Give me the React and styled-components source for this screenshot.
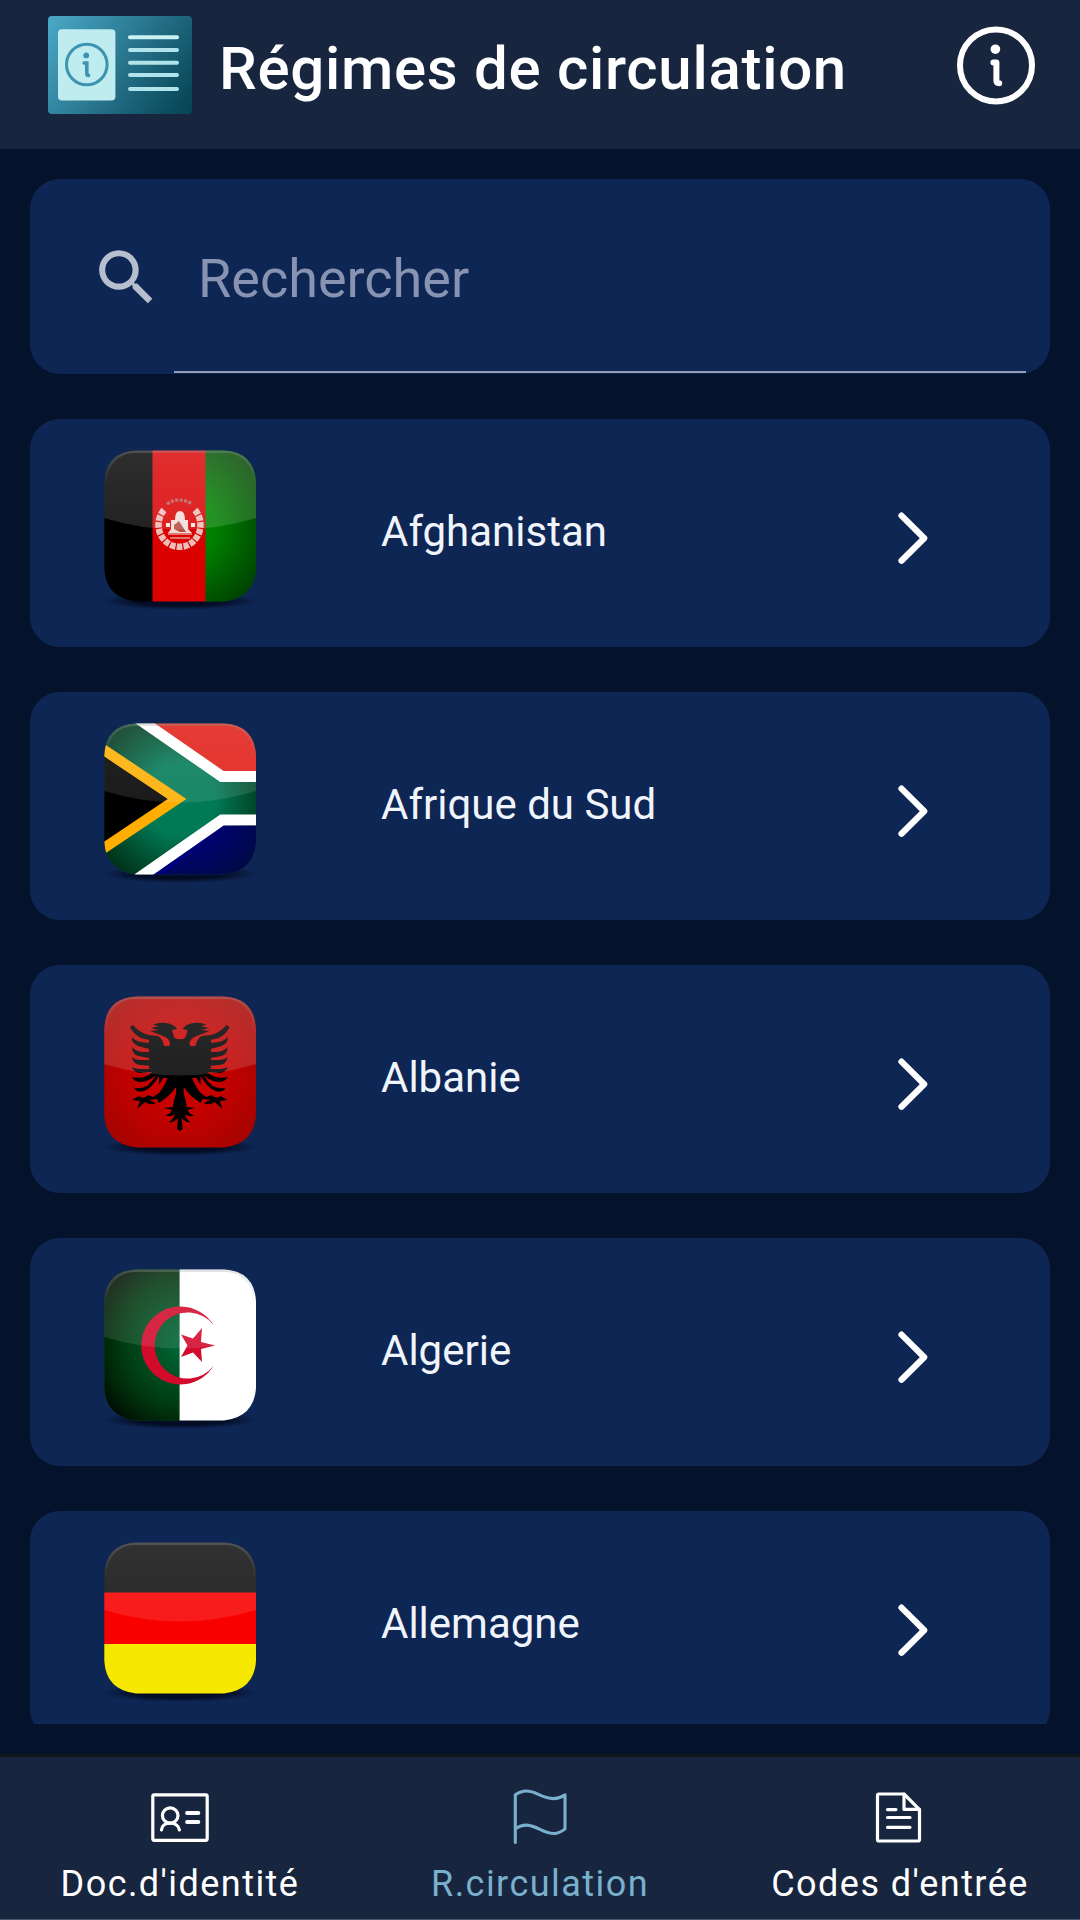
import React from 'react';
import styled, { createGlobalStyle } from 'styled-components';

const GlobalStyle = createGlobalStyle`
  *, *::before, *::after { box-sizing: border-box; }
  html, body { margin: 0; padding: 0; background: #04122b; }
`;

const Screen = styled.div`
  display: flex;
  flex-direction: column;
  width: 1080px;
  height: 1920px;
  overflow: hidden;
  background: #04122b;
  color: #fff;
  font-family: Roboto, "Noto Sans", sans-serif;
`;

const Header = styled.header`
  display: flex;
  align-items: flex-start;
  flex: none;
  height: 149px;
  padding: 0 44px 0 47px;
  background: #18253f;
`;

const LogoSlot = styled.div`
  flex: none;
  width: 145px;
  margin-top: 15px;
  svg { display: block; }
`;

const Title = styled.h1`
  flex: 1;
  margin: 34px 0 0 27px;
  font-size: 60px;
  line-height: 70px;
  font-weight: 500;
  letter-spacing: 0.7px;
  white-space: nowrap;
`;

const InfoButton = styled.button`
  flex: none;
  display: block;
  width: 80px;
  height: 80px;
  margin: 25px 0 0;
  padding: 0;
  border: 0;
  background: none;
  color: inherit;
  svg { display: block; }
`;

const Content = styled.main`
  display: flex;
  flex-direction: column;
  flex: none;
  height: 1575px;
  padding: 30px 30px 0;
  overflow: hidden;
`;

const SearchBox = styled.label`
  display: flex;
  align-items: stretch;
  flex: none;
  height: 195px;
  padding: 0 24px 1px 60px;
  border-radius: 30px;
  background: #0e2654;
  svg { flex: none; margin-top: 62px; }
`;

const SearchInput = styled.input`
  flex: 1;
  min-width: 0;
  margin: 0 0 0 11px;
  padding: 6px 0 0 24px;
  border: 0;
  border-bottom: 2px solid #929cb4;
  border-radius: 0;
  outline: 0;
  background: none;
  color: #fff;
  font: 400 54px Roboto, "Noto Sans", sans-serif;
  &::placeholder { color: #8793b0; opacity: 1; }
`;

const CountryList = styled.ul`
  display: flex;
  flex-direction: column;
  flex: none;
  gap: 45px;
  margin: 45px 0 0;
  padding: 0;
  list-style: none;
`;

const CountryRow = styled.li`
  display: flex;
  align-items: flex-start;
  height: 228px;
  padding: 0 116px 0 66px;
  border-radius: 30px;
  background: #0e2654;
`;

const FlagSlot = styled.div`
  flex: none;
  width: 168px;
  height: 168px;
  margin-top: 31px;
  background: radial-gradient(ellipse 78px 9px at 50% 151px, rgba(1, 8, 28, 0.85) 55%, rgba(1, 8, 28, 0) 100%);
  svg { display: block; filter: blur(0.6px); }
`;

const CountryName = styled.span`
  flex: 1;
  margin: 88px 0 0 117px;
  font-size: 42px;
  line-height: 50px;
  color: #f0f5fc;
  white-space: nowrap;
`;

const ChevronSlot = styled.span`
  flex: none;
  margin-top: 89px;
  svg { display: block; }
`;

const TabBar = styled.nav`
  display: flex;
  flex: none;
  height: 166px;
  margin-top: 30px;
  border-top: 3px solid #101518;
  border-bottom: 1px solid #4b5468;
  background: #18253f;
`;

const Tab = styled.a`
  display: flex;
  flex-direction: column;
  align-items: center;
  flex: 1;
  padding-top: 31px;
  color: ${(p) => (p.$active ? '#78b0cd' : '#ffffff')};
  svg { display: block; }
`;

const TabLabel = styled.span`
  margin-top: 15px;
  font-size: 36px;
  line-height: 42px;
  letter-spacing: 1.45px;
  white-space: nowrap;
`;

function Logo() {
  return (
    <svg width="146" height="100" viewBox="0 0 146 100" fill="none">
      <defs>
        <linearGradient id="logoFill" x1="0" y1="0" x2="146" y2="100" gradientUnits="userSpaceOnUse">
          <stop offset="0" stopColor="#4baac9" />
          <stop offset="0.45" stopColor="#2c7a93" />
          <stop offset="0.9" stopColor="#0a4a5c" />
          <stop offset="1" stopColor="#074455" />
        </linearGradient>
      </defs>
      <rect x="1" y="1" width="144" height="98" rx="4" fill="url(#logoFill)" />
      <rect x="11" y="14.2" width="57.4" height="71.3" rx="4" fill="#bfecef" />
      <circle cx="39.8" cy="49.5" r="20.3" stroke="#3c94b1" strokeWidth="3" />
      <circle cx="39.2" cy="40.4" r="2.9" fill="#3c94b1" />
      <path d="M37.2 48H39.8V58.2Q39.8 60.4 41.6 60.4" stroke="#3c94b1" strokeWidth="3.6" strokeLinecap="round" />
      <g stroke="#b0e3ea" strokeWidth="4" strokeLinecap="round">
        <path d="M83 22.2H130" stroke="#c8f2f4" />
        <path d="M83 35H130M83 47.8H130M83 60H130M83 74H130" />
      </g>
    </svg>
  );
}

function InfoIcon() {
  return (
    <svg width="80" height="80" viewBox="0 0 80 80" fill="none">
      <circle cx="40" cy="40.4" r="36" stroke="#fff" strokeWidth="6" />
      <circle cx="39.4" cy="24.2" r="4.8" fill="#fff" />
      <path d="M37.4 37.6H40.4V55.6Q40.4 58.3 43.2 58.3" stroke="#fff" strokeWidth="6" strokeLinecap="round" strokeLinejoin="round" />
    </svg>
  );
}

function SearchIcon() {
  return (
    <svg width="73" height="73" viewBox="0 0 24 24" fill="#b7bfcf">
      <path d="M15.5 14h-.79l-.28-.27A6.471 6.471 0 0 0 16 9.5 6.5 6.5 0 1 0 9.5 16c1.61 0 3.09-.59 4.23-1.57l.27.28v.79l5 4.99L20.49 19l-4.99-5zm-6 0C7.01 14 5 11.99 5 9.5S7.01 5 9.5 5 14 7.01 14 9.5 11.99 14 9.5 14z" />
    </svg>
  );
}

function Chevron() {
  return (
    <svg width="40" height="60" viewBox="0 0 40 60" fill="none">
      <path d="M7.5 7.6L30.2 30.2L7.5 52.8" stroke="#fff" strokeWidth="6.2" strokeLinecap="round" strokeLinejoin="round" />
    </svg>
  );
}

function IdCardIcon() {
  return (
    <svg width="60" height="60" viewBox="0 0 60 60" fill="none" stroke="currentColor" strokeWidth="3.2" strokeLinecap="round">
      <rect x="2.8" y="6.9" width="54.4" height="45.4" rx="1.5" />
      <ellipse cx="20.2" cy="27.5" rx="7.8" ry="7.6" />
      <path d="M11.4 42C11.8 38 15.1 35.1 20.2 35.1S28.8 38 29.4 42" />
      <path d="M37 25H48.4M37 34H48.4" strokeWidth="3.8" />
    </svg>
  );
}

function FlagIcon() {
  return (
    <svg width="60" height="60" viewBox="0 0 60 60" fill="none" stroke="currentColor" strokeWidth="3.1" strokeLinecap="round" strokeLinejoin="round">
      <path d="M5.3 54.4V6.9C13 1.6 19 2 29 6.6C40 11.7 47 12.1 55 6.9V40.9C47 47.4 41 46.7 30 41.4C19.5 36.2 13.5 35.4 5.3 40.7" />
    </svg>
  );
}

function DocumentIcon() {
  return (
    <svg width="60" height="60" viewBox="0 0 60 60" fill="none" stroke="currentColor" strokeWidth="3.2" strokeLinecap="round" strokeLinejoin="round">
      <path d="M34 6H9Q7.5 6 7.5 7.5V51.5Q7.5 53 9 53H48Q49.5 53 49.5 51.5V21.6Z" />
      <path d="M34 6V21.4H49.5" />
      <path d="M17.5 21.6H26M17.5 29.5H40M17.5 39.3H40" />
    </svg>
  );
}

function AfghanistanArt() {
  return (
    <>
      <rect width="49" height="152" fill="#000" />
      <rect x="48.5" width="53.5" height="152" fill="#da0000" />
      <rect x="101.5" width="51" height="152" fill="#008000" />
      <rect x="101.5" width="51" height="152" fill="url(#vignette)" opacity="0.8" />
      <g fill="none" stroke="#eed2cc">
        <path d="M60 60A21 22 0 1 0 91 60" strokeWidth="6.5" strokeDasharray="5.5 1.2" opacity="0.9" />
        <path d="M63 54Q75 46 88 54" strokeWidth="3.2" stroke="#b8635a" strokeDasharray="3 1.5" />
        <path d="M66 88H86M64 84H88" strokeWidth="2" opacity="0.55" />
      </g>
      <path d="M67 79V70H71Q71 61 76 61T81 70H84V79L88 83H64Z" fill="#f0dcd7" />
      <path d="M70 75L75 71L82 82H76L70 79Z" fill="#b84a42" />
      <path d="M62 75h4M87 75h4" stroke="#f4e8e4" strokeWidth="4" />
    </>
  );
}

function SouthAfricaArt() {
  return (
    <>
      <rect width="152" height="152" fill="#007a55" />
      <rect width="152" height="152" fill="url(#vignette)" />
      <path d="M38 -6L119 48.5H152V-6Z" fill="#e01c14" />
      <path d="M38 158L119 102.5H152V158Z" fill="#00007c" />
      <path d="M32 -6L118 53.5H153M32 157L118 97H153" fill="none" stroke="#fff" strokeWidth="11" />
      <path d="M-4 24L73 76L-4 128Z" fill="#000" />
      <path d="M-6 23L73 76L-6 129" fill="none" stroke="#ffae00" strokeWidth="10.5" />
      <path d="M152 102V152H60L119 102Z" fill="url(#vignette)" opacity="0.6" />
    </>
  );
}

const EAGLE_HALF =
  'M76 43Q72 44 70 41L68 34L73 33Q70 28 62 27Q54 26 49 29L55 30L47 32L54 34L46 35Q54 38 59 40Q65 42 66 47L65 52Q62 54 60 50Q59 43 54 40L45 39Q36 37 29 29L26 31Q29 38 37 42L45 44V47L37 46Q31 45 28 41Q27 47 34 50L45 53V56H38Q31 55 28 51Q28 58 34 60L45 62V64H37Q31 64 28 61Q29 68 36 69L48 70L45 73H36Q31 73 28 71Q29 76 36 77L48 76L45 79Q38 83 28 81Q30 86 37 86Q44 86 52 79Q48 86 43 90Q37 93 30 92Q33 97 40 95Q48 92 55 80V89L59 82L64 81Q60 91 55 97L49 101L44 99Q39 104 35 100L28 104L36 105L33 113L41 106Q47 110 52 107L45 104L53 103L55 107Q66 100 72 91V98Q69 106 69 111L60 112L68 114Q66 119 61 119Q66 122 71 118Q69 124 65 126Q70 127 74 122L73 133L76 135Z';

function AlbaniaArt() {
  return (
    <>
      <rect width="152" height="152" fill="#c90000" />
      <rect width="152" height="152" fill="url(#vignette)" opacity="0.25" />
      <path d="M45 42L60 50H92L107 42V72L90 82H62L45 72Z" fill="#000" />
      <path d={EAGLE_HALF} fill="#000" />
      <path d={EAGLE_HALF} fill="#000" transform="translate(151.6 0) scale(-1 1)" />
    </>
  );
}

function AlgeriaArt() {
  return (
    <>
      <rect width="76" height="152" fill="#006233" />
      <rect width="76" height="152" fill="url(#deepVignette)" />
      <rect x="75.6" width="77" height="152" fill="#fff" />
      <path d="M109.5 56A39 39 0 1 0 109.5 97A33 33 0 1 1 109.5 56Z" fill="#d20a2c" />
      <path d="M111 76.5L97 80L98 93L89 83.5L77 88L83.5 76.5L77 65.5L89 69.5L98 59L97 73Z" fill="#d20a2c" />
    </>
  );
}

function GermanyArt() {
  return (
    <>
      <rect width="152" height="51" fill="#101010" />
      <rect y="50.5" width="152" height="52" fill="#f80000" />
      <rect y="102" width="152" height="50" fill="#f7e800" />
    </>
  );
}

function GlossyFlag({ art: Art, gloss = 0.15 }) {
  return (
    <svg width="168" height="168" viewBox="-8 0 168 168">
      <g clipPath="url(#flagClip)">
        <Art />
        <path d="M0 0H152V68Q114 79.5 76 79.5T0 68Z" fill="url(#gloss)" opacity={gloss} />
        <rect x="1.5" y="1.5" width="149" height="170" rx="29" fill="none" stroke="url(#rim)" strokeWidth="3" />
      </g>
    </svg>
  );
}

const SharedDefs = styled.svg`
  display: block;
  flex: none;
  width: 0;
  height: 0;
`;

function FlagDefs() {
  return (
    <SharedDefs aria-hidden="true">
      <defs>
        <clipPath id="flagClip">
          <path d="M32 0.5H120Q150 2 152 32V119Q150 148 120 151.5H32Q2 148 0.3 119V32Q2 2 32 0.5Z" />
        </clipPath>
        <radialGradient id="vignette" gradientUnits="userSpaceOnUse" cx="76" cy="76" r="100">
          <stop offset="0.35" stopColor="#001500" stopOpacity="0" />
          <stop offset="1" stopColor="#001500" stopOpacity="0.8" />
        </radialGradient>
        <radialGradient id="deepVignette" gradientUnits="userSpaceOnUse" cx="80" cy="76" r="102">
          <stop offset="0.1" stopColor="#003000" stopOpacity="0" />
          <stop offset="0.65" stopColor="#002600" stopOpacity="0.75" />
          <stop offset="1" stopColor="#000400" stopOpacity="1" />
        </radialGradient>
        <linearGradient id="gloss" x1="0" y1="0" x2="0" y2="1">
          <stop offset="0" stopColor="#fff" stopOpacity="1" />
          <stop offset="1" stopColor="#fff" stopOpacity="0.75" />
        </linearGradient>
        <linearGradient id="rim" x1="0" y1="0" x2="0" y2="1">
          <stop offset="0" stopColor="#9aa0a8" stopOpacity="0.3" />
          <stop offset="0.2" stopColor="#9aa0a8" stopOpacity="0" />
        </linearGradient>
      </defs>
    </SharedDefs>
  );
}

const COUNTRIES = [
  { name: 'Afghanistan', art: AfghanistanArt, gloss: 0.18 },
  { name: 'Afrique du Sud', art: SouthAfricaArt, gloss: 0.14 },
  { name: 'Albanie', art: AlbaniaArt, gloss: 0.17 },
  { name: 'Algerie', art: AlgeriaArt, gloss: 0.14 },
  { name: 'Allemagne', art: GermanyArt, gloss: 0.14 },
];

const TABS = [
  { label: "Doc.d'identité", icon: IdCardIcon },
  { label: 'R.circulation', icon: FlagIcon, active: true },
  { label: "Codes d'entrée", icon: DocumentIcon },
];

export default function App() {
  return (
    <Screen>
      <GlobalStyle />
      <FlagDefs />
      <Header>
        <LogoSlot><Logo /></LogoSlot>
        <Title>Régimes de circulation</Title>
        <InfoButton type="button" aria-label="Informations"><InfoIcon /></InfoButton>
      </Header>
      <Content>
        <SearchBox>
          <SearchIcon />
          <SearchInput type="text" placeholder="Rechercher" />
        </SearchBox>
        <CountryList>
          {COUNTRIES.map(({ name, art, gloss }) => (
            <CountryRow key={name}>
              <FlagSlot><GlossyFlag art={art} gloss={gloss} /></FlagSlot>
              <CountryName>{name}</CountryName>
              <ChevronSlot><Chevron /></ChevronSlot>
            </CountryRow>
          ))}
        </CountryList>
      </Content>
      <TabBar>
        {TABS.map(({ label, icon: Icon, active }) => (
          <Tab key={label} $active={active}>
            <Icon />
            <TabLabel>{label}</TabLabel>
          </Tab>
        ))}
      </TabBar>
    </Screen>
  );
}
